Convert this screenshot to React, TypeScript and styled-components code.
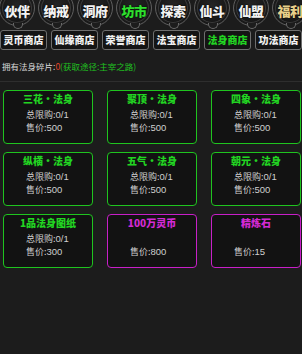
import styled, { createGlobalStyle } from 'styled-components';

const GlobalStyle = createGlobalStyle`
  html, body {
    margin: 0;
    padding: 0;
    background: #1c1c1c;
  }
  body {
    width: 302px;
    height: 354px;
    overflow: hidden;
    font-family: "Noto Sans CJK SC", "Noto Sans", sans-serif;
  }
`;

const Page = styled.div`
  display: flex;
  flex-direction: column;
  width: 302px;
  height: 354px;
  overflow: hidden;
  background: #1c1c1c;
`;

const NavRow = styled.div`
  display: flex;
  gap: 3px;
  margin-top: -10px;
  margin-left: -1px;
`;

const NavCircle = styled.div<{ $color: string }>`
  position: relative;
  flex: 0 0 auto;
  display: flex;
  align-items: center;
  justify-content: center;
  box-sizing: border-box;
  width: 36px;
  height: 36px;
  padding-top: 5px;
  border: 1.5px solid #5e5e5e;
  border-radius: 50%;
  background: radial-gradient(circle at 50% 45%, #262626 0%, #141414 75%);
  box-shadow: inset 0 0 0 2px #1a1a1a, inset 0 0 0 3px #3a3a3a;
  color: ${p => p.$color};
  font-size: 13px;
  font-weight: 900;
  line-height: 16px;
  letter-spacing: -0.5px;
  white-space: nowrap;
  text-shadow: 0 0 2px #000;

  &::after {
    content: '';
    position: absolute;
    bottom: -4px;
    left: 50%;
    width: 8px;
    height: 5px;
    margin-left: -4px;
    border: 1.5px solid #6a6a6a;
    border-top: none;
    border-radius: 0 0 5px 5px;
    background: #1c1c1c;
  }
`;

const TabRow = styled.div`
  display: flex;
  gap: 4px;
  margin-top: 4px;
`;

const Tab = styled.div<{ $active?: boolean }>`
  flex: 0 0 47px;
  display: flex;
  align-items: center;
  justify-content: center;
  box-sizing: border-box;
  height: 20px;
  border: 1.5px solid #6e6e6e;
  border-radius: 3px;
  background: #141414;
  color: ${p => (p.$active ? '#22d422' : '#f0f0f0')};
  font-size: 10px;
  font-weight: 900;
  line-height: 14px;
  white-space: nowrap;
`;

const InfoLine = styled.div`
  margin-top: 10px;
  padding-left: 2px;
  font-size: 8.5px;
  line-height: 12px;
  color: #d8d8d8;
  white-space: nowrap;
`;

const Red = styled.span`
  color: #e0452a;
`;

const Green = styled.span`
  color: #20c020;
`;

const Panel = styled.div`
  flex: 1;
  display: grid;
  grid-template-columns: repeat(3, 90px);
  grid-auto-rows: 54px;
  column-gap: 14px;
  row-gap: 8px;
  align-content: start;
  margin-top: 9px;
  padding: 8px 0 0 3px;
  border-top: 1px solid #2e2e2e;
  background: #1c1c1c;
`;

const Card = styled.div<{ $color: string }>`
  display: flex;
  flex-direction: column;
  box-sizing: border-box;
  padding: 2px 0 0 0;
  border: 1.5px solid ${p => p.$color};
  border-radius: 4px;
  background: #121212;
`;

const Title = styled.div<{ $color: string }>`
  text-align: center;
  color: ${p => p.$color};
  font-size: 10px;
  font-weight: 900;
  line-height: 12px;
  height: 12px;
  margin-bottom: 3px;
  white-space: nowrap;
`;

const Line = styled.div<{ $hidden?: boolean }>`
  padding-left: 22px;
  color: #cfcfcf;
  font-size: 9px;
  line-height: 13px;
  height: 13px;
  white-space: nowrap;
  visibility: ${p => (p.$hidden ? 'hidden' : 'visible')};

  b {
    font-family: "Liberation Sans", Arial, sans-serif;
    font-size: 9.5px;
    font-weight: normal;
  }
`;

const navs = [
  { name: '伙伴', color: '#f2f2f2' },
  { name: '纳戒', color: '#f2f2f2' },
  { name: '洞府', color: '#f2f2f2' },
  { name: '坊市', color: '#2ee02e' },
  { name: '探索', color: '#f2f2f2' },
  { name: '仙斗', color: '#f2f2f2' },
  { name: '仙盟', color: '#f2f2f2' },
  { name: '福利', color: '#e8cf8a' },
];

const tabs = ['灵币商店', '仙缘商店', '荣誉商店', '法宝商店', '法身商店', '功法商店'];

const GREEN = '#1fc41f';
const PINK = '#c81fc8';

const items = [
  { title: '三花·法身', limit: true, price: '500', color: GREEN },
  { title: '聚顶·法身', limit: true, price: '500', color: GREEN },
  { title: '四象·法身', limit: true, price: '500', color: GREEN },
  { title: '纵横·法身', limit: true, price: '500', color: GREEN },
  { title: '五气·法身', limit: true, price: '500', color: GREEN },
  { title: '朝元·法身', limit: true, price: '500', color: GREEN },
  { title: '1品法身图纸', limit: true, price: '300', color: GREEN },
  { title: '100万灵币', limit: false, price: '800', color: PINK },
  { title: '精炼石', limit: false, price: '15', color: PINK },
];

export default function App() {
  return (
    <Page>
      <GlobalStyle />
      <NavRow>
        {navs.map(n => (
          <NavCircle key={n.name} $color={n.color}>{n.name}</NavCircle>
        ))}
      </NavRow>
      <TabRow>
        {tabs.map(t => (
          <Tab key={t} $active={t === '法身商店'}>{t}</Tab>
        ))}
      </TabRow>
      <InfoLine>
        拥有法身碎片:<Red>0</Red><Green>(获取途径:主宰之路)</Green>
      </InfoLine>
      <Panel>
        {items.map(it => (
          <Card key={it.title} $color={it.color}>
            <Title $color={it.color === GREEN ? '#22d422' : '#d42ad4'}>{it.title}</Title>
            <Line $hidden={!it.limit}>总限购:<b>0/1</b></Line>
            <Line>售价:<b>{it.price}</b></Line>
          </Card>
        ))}
      </Panel>
    </Page>
  );
}
